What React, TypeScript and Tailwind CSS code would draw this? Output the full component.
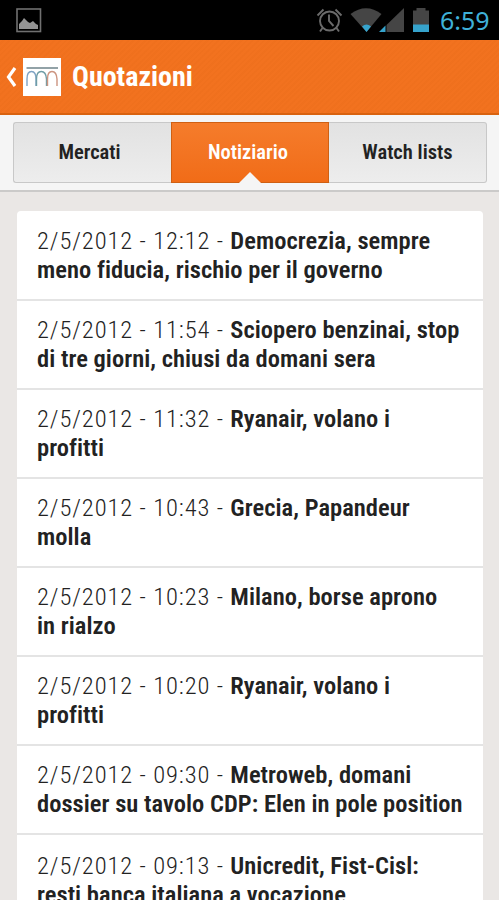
import React, { useState } from 'react';

interface NewsItem {
  date: string;
  title: string;
  rest: string;
}

const news: NewsItem[] = [
  { date: '2/5/2012 - 12:12 - ', title: 'Democrezia, sempre', rest: 'meno fiducia, rischio per il governo' },
  { date: '2/5/2012 - 11:54 - ', title: 'Sciopero benzinai, stop', rest: 'di tre giorni, chiusi da domani sera' },
  { date: '2/5/2012 - 11:32 - ', title: 'Ryanair, volano i', rest: 'profitti' },
  { date: '2/5/2012 - 10:43 - ', title: 'Grecia, Papandeur', rest: 'molla' },
  { date: '2/5/2012 - 10:23 - ', title: 'Milano, borse aprono', rest: 'in rialzo' },
  { date: '2/5/2012 - 10:20 - ', title: 'Ryanair, volano i', rest: 'profitti' },
  { date: '2/5/2012 - 09:30 - ', title: 'Metroweb, domani', rest: 'dossier su tavolo CDP: Elen in pole position' },
  { date: '2/5/2012 - 09:13 - ', title: 'Unicredit, Fist-Cisl:', rest: 'resti banca italiana a vocazione' },
];

const tabs = ['Mercati', 'Notiziario', 'Watch lists'];

const StatusBar: React.FC = () => (
  <div className="h-10 bg-black flex items-center justify-between pl-4 pr-[9px]">
    <svg width="26" height="25" viewBox="0 0 26 25" fill="none">
      <rect x="1" y="1" width="23.5" height="22.5" stroke="#707070" strokeWidth="1.6" />
      <path d="M3 21v-5l3-3 2-3 4 4 2 1 3-2 3 3 2 1v4z" fill="#949494" />
    </svg>
    <div className="flex items-center">
      <svg width="115" height="28" viewBox="0 0 115 28" fill="none">
        <g stroke="#6b6b6b" strokeWidth="1.9">
          <circle cx="14.5" cy="15" r="9.5" />
          <path d="M14 8.500v6.500l4.500 5M2.500 9.500l6-6M26.500 9.500l-6-6M7.500 22l-2.500 3.500M21.500 22l2.500 3.500" />
        </g>
        <path d="M35.500 8Q51-3.500 66.500 8L51.500 26z" fill="#454545" />
        <path d="M47 20.500q4.500-4 9 0L51.500 26z" fill="#36a3cc" />
        <path d="M71.500 19L89 2v24H71.500z" fill="#454545" />
        <path d="M64 26l6.500-6.500V26z" fill="#36a3cc" />
        <path d="M98 4.500h3.500V2h9v2.500h3.500V26H98z" fill="#454545" />
        <path d="M98 18.500h16V26H98z" fill="#36a3cc" />
      </svg>
      <span className="w-[50px] ml-[10px] mt-px font-['Noto_Sans'] text-[25px] leading-none text-[#3fb0d8]">6:59</span>
    </div>
  </div>
);

const Logo: React.FC = () => (
  <svg width="38" height="38" viewBox="0 0 38 38" fill="none" strokeWidth="1.4">
    <path d="M3.500 10H35" stroke="#7f9298" strokeWidth="1.7" />
    <path d="M4 28v-7q0-7.500 4.500-7.500T13 21v7" stroke="#7fa3c4" />
    <path d="M13.500 28v-7q0-7.500 4.750-7.500T23.500 21v7" stroke="#6f9da6" />
    <path d="M24.500 28v-7q0-7.500 4.500-7.500t5 7.500v7" stroke="#cc9480" />
  </svg>
);

const App: React.FC = () => {
  const [active, setActive] = useState('Notiziario');

  return (
    <div className="w-full h-[900px] overflow-hidden bg-[#eae7e5] font-['Roboto'] text-[#222]">
      <StatusBar />

      <header className="h-[75px] bg-[#f2721f] bg-[repeating-linear-gradient(135deg,transparent_0_2px,rgba(190,80,0,0.05)_2px_4px)] border-b-2 border-[#d9620f] flex items-center pl-[6px]">
        <svg width="11" height="20" viewBox="0 0 11 20" fill="none">
          <path d="M9 1L2.500 10L9 19" stroke="#fff" strokeWidth="3.200" />
        </svg>
        <div className="ml-[6px] mt-px size-[38px] bg-white">
          <Logo />
        </div>
        <h1 className="ml-[11px] mt-px font-['Roboto_Condensed','Roboto'] font-stretch-condensed text-[28px] font-bold text-white">Quotazioni</h1>
      </header>

      <nav className="h-[77px] bg-[#f5f5f5] border-b-2 border-[#cbcac9] pl-[13px] pr-3 pt-[7px]">
        <div className="flex h-[61px] font-['Roboto_Condensed','Roboto'] font-stretch-condensed text-[20.500px] font-semibold">
          {tabs.map((tab) => (
            <button
              key={tab}
              onClick={() => setActive(tab)}
              className={
                active === tab
                  ? 'relative w-1/3 pr-1 bg-linear-to-b from-[#f57c2b] to-[#f16c17] border border-[#cf6013] text-white'
                  : 'w-1/3 first:pr-[6px] bg-linear-to-b from-[#e2e2e2] to-[#ededed] border border-[#c8c8c8] first:border-r-0 last:border-l-0 first:rounded-l-[3px] last:rounded-r-[3px]'
              }
            >
              {tab}
              {active === tab && (
                <svg className="absolute -bottom-px left-1/2 -translate-x-1/2" width="22" height="11" viewBox="0 0 22 11">
                  <path d="M0 11L11 0l11 11z" fill="#f5f5f5" />
                </svg>
              )}
            </button>
          ))}
        </div>
      </nav>

      <ul className="ml-[17px] mr-4 mt-[19px] bg-white rounded-t font-['Roboto_Condensed','Roboto'] font-stretch-condensed text-[24.500px] leading-[29px]">
        {news.map((item) => (
          <li
            key={item.date}
            className="h-[89px] first:h-[90px] pl-5 pt-[14px] first:pt-[15px] last:pt-4 border-b-2 border-[#e4e4e4] whitespace-pre"
          >
            <span className="font-[350] tracking-[0.900px]">{item.date}</span>
            <span className="font-semibold tracking-[0.030px]">{item.title}</span>
            <br />
            <span className="font-semibold tracking-[0.030px]">{item.rest}</span>
          </li>
        ))}
      </ul>
    </div>
  );
};

export default App;
